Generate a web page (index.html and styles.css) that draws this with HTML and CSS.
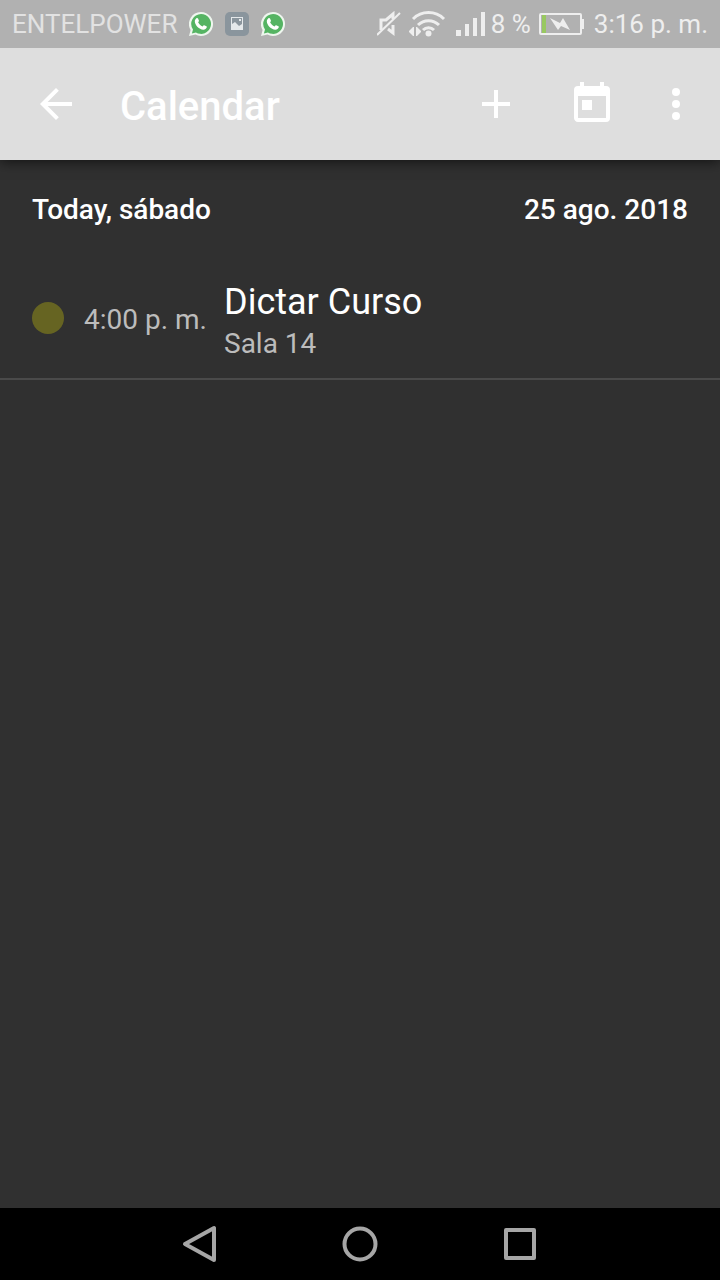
FILE: index.html
```
<!DOCTYPE html>
<html lang="es">
<head>
  <meta charset="UTF-8">
  <meta name="viewport" content="width=device-width, initial-scale=1.0">
  <link rel="stylesheet" href="styles.css">
  <title>Calendar</title>
</head>
<body>
  <svg class="sprite" aria-hidden="true">
    <symbol id="whatsapp" viewBox="0 0 24 24">
      <path fill="#eef6ee" d="M12 0a12 12 0 1 1-5.6 22.6L0 24l1.6-6A12 12 0 0 1 12 0z"/>
      <path fill="#55b463" d="M12.1 1.9a10 10 0 1 1-5.200 18.600l-4 .9 1.100-3.900A10 10 0 0 1 12.100 1.900z"/>
      <path fill="#fff" d="M7.4 6.2c.5-.5 1.3-.4 1.6.2l.9 2c.2.5 0 .8-.8 1.8 1 2 2.4 3.3 4.5 4.2.8-1 1.100-1.400 1.600-1.200l2.200 1.100c.5.3.5.6.3 1.3-.4 1.3-2 2.2-3.400 2.100-4.300-.5-8.200-4.400-8.500-8.300 0-1.200.6-2.400 1.600-3.200z"/>
    </symbol>
  </svg>

  <header class="status-bar">
    <span class="carrier">ENTELPOWER</span>
    <div class="notifications">
      <svg width="24" height="24"><use href="#whatsapp"/></svg>
      <svg width="24" height="24" viewBox="0 0 24 24">
        <rect width="24" height="24" rx="5" fill="#8a959d"/>
        <path fill="#e4e8ea" fill-rule="evenodd" d="M6 5h12v13H6zM7 6v6l3-2 4 4 3-2V6zM14 7h2v2h-2z"/>
      </svg>
      <svg width="24" height="24"><use href="#whatsapp"/></svg>
    </div>
    <div class="indicators">
      <svg width="24" height="26" viewBox="0 0 24 26" fill="none" stroke="currentColor" stroke-width="3">
        <path d="M4 19V9h5l7-6v5M16 14v8l-5-4"/>
        <path stroke-width="2" d="M0 24 23 2"/>
      </svg>
      <svg class="wifi" width="37" height="26" viewBox="0 0 37 26">
        <g fill="none" stroke="currentColor" stroke-width="4">
          <path d="M4 8a22 22 0 0 1 31 0M9 14a15 15 0 0 1 21 0M14 19a8 8 0 0 1 11 0" stroke-width="3"/>
        </g>
        <circle cx="19.5" cy="22.5" r="3" fill="currentColor"/>
        <path fill="currentColor" d="M5 16v9h-1L0 21v-1l4-4zM7 16v9h1l4-4v-1l-4-4z"/>
      </svg>
      <svg class="signal" width="29" height="24" viewBox="0 0 29 24" fill="currentColor">
        <path d="M0 18h5v6H0zM9 12h4v12H9zM17 6h4v18h-4zM25 0h4v24h-4z"/>
      </svg>
      <span class="percent">8 %</span>
      <svg class="battery" width="45" height="22" viewBox="0 0 45 22">
        <rect x="3" y="2" width="4" height="18" fill="#98c860"/>
        <rect x="1" y="1" width="41" height="20" rx="1" fill="none" stroke="currentColor" stroke-width="2"/>
        <path fill="currentColor" d="M43 6h2v10h-2zM11 5l10 5 3-5 7 12-9-4-3 4z"/>
      </svg>
      <time datetime="15:16">3:16 p. m.</time>
    </div>
  </header>

  <nav class="app-bar">
    <button class="back" aria-label="Back">
      <svg viewBox="0 0 24 24"><path d="M20 11H7.83l5.59-5.59L12 4l-8 8 8 8 1.41-1.41L7.83 13H20z"/></svg>
    </button>
    <h1>Calendar</h1>
    <button aria-label="Add event">
      <svg viewBox="0 0 24 24"><path d="M19 13h-6v6h-2v-6H5v-2h6V5h2v6h6z"/></svg>
    </button>
    <button aria-label="Go to today">
      <svg viewBox="0 0 24 24"><path d="M19 3h-1V1h-2v2H8V1H6v2H5a2 2 0 0 0-2 2v14c0 1.1.9 2 2 2h14a2 2 0 0 0 2-2V5a2 2 0 0 0-2-2zm0 16H5V8h14zM7 10h5v5H7z"/></svg>
    </button>
    <button class="more" aria-label="More options">
      <svg viewBox="0 0 24 24"><circle cx="12" cy="6" r="2"/><circle cx="12" cy="12" r="2"/><circle cx="12" cy="18" r="2"/></svg>
    </button>
  </nav>

  <main>
    <h2 class="day">
      <span>Today, sábado</span>
      <time datetime="2018-08-25">25 ago. 2018</time>
    </h2>
    <ul class="events">
      <li class="event">
        <span class="dot"></span>
        <time datetime="16:00">4:00 p. m.</time>
        <div class="details">
          <h3>Dictar Curso</h3>
          <p>Sala 14</p>
        </div>
      </li>
    </ul>
  </main>

  <footer class="nav-bar">
    <button aria-label="Back">
      <svg viewBox="0 0 40 40"><path d="M34 4v32L5 20z"/></svg>
    </button>
    <button aria-label="Home">
      <svg viewBox="0 0 40 40"><circle cx="20" cy="20" r="15.5"/></svg>
    </button>
    <button aria-label="Recent apps">
      <svg viewBox="0 0 40 40"><rect x="6" y="6" width="28" height="28"/></svg>
    </button>
  </footer>
</body>
</html>
```
FILE: styles.css
```
:root {
  --color-status: #b1b1b1;
  --color-bar: #dedede;
  --color-background: #303030;
  --color-divider: #4a4a4a;
  --color-icon: #eeeeee;
  --color-white: #ffffff;
  --color-muted: #bcbcbc;
  --color-event: #666422;
  --color-nav: #a6a6a6;
}

* {
  margin: 0;
  padding: 0;
  box-sizing: border-box;
}

body {
  display: flex;
  flex-direction: column;
  min-height: 100vh;
  font-family: Roboto, sans-serif;
  font-size: 28px;
  color: var(--color-white);
  background-color: var(--color-background);
}

button {
  display: flex;
  align-items: center;
  justify-content: center;
  border: none;
  background: none;
  color: inherit;
  cursor: pointer;
}

svg {
  display: block;
  flex-shrink: 0;
}

.sprite {
  position: absolute;
  width: 0;
  height: 0;
}

/* stays above the app bar's shadow */
.status-bar {
  position: relative;
  z-index: 1;
  display: flex;
  align-items: center;
  height: 48px;
  padding: 0 12px;
  font-size: 26px;
  line-height: 48px;
  white-space: nowrap;
  color: var(--color-icon);
  background-color: var(--color-status);
}

.carrier {
  color: #e2e2e2;
}

.notifications {
  display: flex;
  gap: 12px;
  margin-left: 12px;
}

.indicators {
  display: flex;
  align-items: center;
  margin-left: auto;
}

.wifi {
  margin-left: 8px;
}

.signal {
  margin-left: 10px;
}

.percent {
  margin-left: 6px;
}

.battery {
  margin-left: 8px;
  margin-right: 10px;
}

.app-bar {
  display: flex;
  align-items: center;
  height: 112px;
  padding-right: 8px;
  background-color: var(--color-bar);
  box-shadow: 0 2px 12px rgba(0, 0, 0, 0.6);
}

.app-bar h1 {
  flex: 1;
  padding-top: 6px;
  padding-left: 8px;
  font-size: 40px;
  font-weight: 500;
  line-height: 48px;
}

.app-bar button {
  width: 96px;
  height: 96px;
}

.app-bar .back {
  width: 112px;
}

.app-bar .more {
  width: 72px;
}

.app-bar svg {
  width: 48px;
  height: 48px;
  fill: currentColor;
}

main {
  flex: 1;
}

.day {
  display: flex;
  align-items: center;
  justify-content: space-between;
  height: 98px;
  padding: 0 32px;
  font-size: 28px;
  font-weight: 500;
}

.events {
  list-style: none;
}

.event {
  display: flex;
  align-items: center;
  padding: 14px 32px;
  border-bottom: 2px solid var(--color-divider);
}

.dot {
  width: 32px;
  height: 32px;
  margin-right: 20px;
  border-radius: 50%;
  background-color: var(--color-event);
}

.event time {
  width: 140px;
  padding-top: 2px;
  color: var(--color-muted);
}

.details {
  padding-top: 8px;
}

.details h3 {
  font-size: 36px;
  font-weight: 400;
  line-height: 44px;
}

.details p {
  line-height: 40px;
  color: var(--color-muted);
}

.nav-bar {
  display: flex;
  justify-content: center;
  height: 72px;
  background-color: #000000;
}

.nav-bar button {
  width: 160px;
}

.nav-bar svg {
  width: 40px;
  height: 40px;
  fill: none;
  stroke: var(--color-nav);
  stroke-width: 4;
  stroke-linejoin: round;
}
```
